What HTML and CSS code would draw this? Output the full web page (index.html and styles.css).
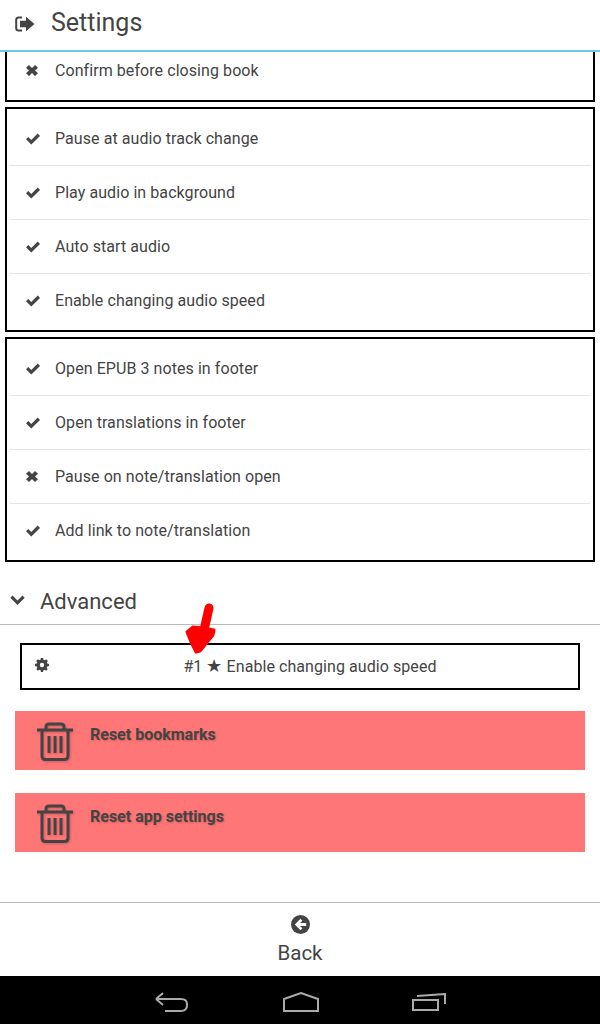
FILE: index.html
```html
<!DOCTYPE html>
<html lang="en">
<head>
<meta charset="utf-8">
<title>Settings</title>
<link rel="stylesheet" href="styles.css">
</head>
<body>
<svg class="defs" width="0" height="0" aria-hidden="true">
  <defs>
    <symbol id="i-check" viewBox="0 0 14 12"><path d="M0 6.300 2.300 3.900 5.300 6.900 11.700 .5 14 2.900 5.300 11.500Z" fill="currentColor"/></symbol>
    <symbol id="i-x" viewBox="0 0 12 11"><path d="M3 0 6 3 9 0 12 2.800 9 5.500 12 8.200 9 11 6 8 3 11 0 8.200 3 5.500 0 2.800Z" fill="currentColor"/></symbol>
    <symbol id="i-trash" viewBox="0 0 36 40"><path d="M0 8H36M9 7V5Q9 2 12 2H24Q27 2 27 5V7M5 9V34Q5 37.500 8.500 37.500H27.500Q31 37.500 31 34V9M12 14V31M18 14V31M24 14V31" fill="none" stroke="currentColor" stroke-width="3"/></symbol>
  </defs>
</svg>
<header class="topbar">
  <svg class="logout" viewBox="0 0 20 16" aria-hidden="true"><path d="M7 1.500H3.500Q1.200 1.500 1.200 4V12Q1.200 14.500 3.500 14.500H7" fill="none" stroke="currentColor" stroke-width="2"/><path d="M5 4.800H11V.8L19.500 8 11 15.200V11.200H5Z" fill="currentColor"/></svg>
  <h1 class="title">Settings</h1>
</header>
<main class="content">
  <section class="box box-cut">
    <div class="row row-cut"><svg class="state state-x"><use href="#i-x"/></svg><span>Confirm before closing book</span></div>
  </section>
  <section class="box">
    <div class="row"><svg class="state"><use href="#i-check"/></svg><span>Pause at audio track change</span></div>
    <div class="row"><svg class="state"><use href="#i-check"/></svg><span>Play audio in background</span></div>
    <div class="row"><svg class="state"><use href="#i-check"/></svg><span>Auto start audio</span></div>
    <div class="row"><svg class="state"><use href="#i-check"/></svg><span>Enable changing audio speed</span></div>
  </section>
  <section class="box">
    <div class="row"><svg class="state"><use href="#i-check"/></svg><span>Open EPUB 3 notes in footer</span></div>
    <div class="row"><svg class="state"><use href="#i-check"/></svg><span>Open translations in footer</span></div>
    <div class="row"><svg class="state state-x"><use href="#i-x"/></svg><span>Pause on note/translation open</span></div>
    <div class="row"><svg class="state"><use href="#i-check"/></svg><span>Add link to note/translation</span></div>
  </section>
  <div class="section-head">
    <svg class="chevron" viewBox="0 0 16 12" aria-hidden="true"><path d="M1.500 2.500 8 9 14.500 2.500" fill="none" stroke="currentColor" stroke-width="3.400"/></svg>
    <h2 class="section-title">Advanced</h2>
  </div>
  <div class="shortcut">
    <svg class="gear" viewBox="0 0 16 16" aria-hidden="true"><path d="M6.700 0H9.300L9.700 2 11.200 2.600 12.900 1.500 14.700 3.300 13.500 5 14.100 6.400 16 6.800V9.200L14 9.600 13.400 11 14.500 12.700 12.700 14.500 11 13.300 9.600 13.900 9.200 16H6.800L6.400 13.900 5 13.300 3.300 14.500 1.500 12.700 2.600 11 2 9.600 0 9.200V6.800L2 6.400 2.600 5 1.400 3.300 3.200 1.500 4.900 2.600 6.300 2Z" fill="currentColor"/><circle cx="8" cy="8" r="2.500" fill="#fff"/></svg>
    <span class="shortcut-text">#1 <span class="star">★</span> Enable changing audio speed</span>
  </div>
  <button class="reset" type="button"><svg class="trash"><use href="#i-trash"/></svg><span class="reset-label">Reset bookmarks</span></button>
  <button class="reset reset-second" type="button"><svg class="trash"><use href="#i-trash"/></svg><span class="reset-label">Reset app settings</span></button>
  <svg class="scribble" viewBox="0 0 34 54" aria-hidden="true"><path d="M4 30 10 25 20 26 31 28 30 33 17 49 13 50 8 40Z" fill="#f00" stroke="#f00" stroke-width="3" stroke-linejoin="round"/><path d="M26 6 21 28" fill="none" stroke="#f00" stroke-width="9" stroke-linecap="round"/></svg>
</main>
<footer class="footer">
  <svg class="back-icon" viewBox="0 0 20 20" aria-hidden="true"><circle cx="10" cy="10" r="10" fill="currentColor"/><path d="M10 4 4 10 10 16 12 14 9.500 11.500H16V8.500H9.500L12 6Z" fill="#fff"/></svg>
  <span class="back-label">Back</span>
</footer>
<nav class="navbar">
  <svg class="nav-back" viewBox="0 0 34 22" aria-hidden="true"><path d="M1 8H26Q32 8 32 13V14Q32 20 26 20H10M1 8 8 2M1 8 8 14" fill="none" stroke="#aaa" stroke-width="2"/></svg>
  <svg class="nav-home" viewBox="0 0 36 20" aria-hidden="true"><path d="M1 7 18 1 35 7V19H1Z" fill="none" stroke="#aaa" stroke-width="2"/></svg>
  <svg class="nav-recent" viewBox="0 0 34 18" aria-hidden="true"><path d="M1 7H26V17H1ZM5 3 33 1V11" fill="none" stroke="#aaa" stroke-width="2"/></svg>
</nav>
</body>
</html>
```
FILE: styles.css
```css
* { box-sizing: border-box; }
html, body { margin: 0; padding: 0; }
body {
  width: 600px;
  height: 1024px;
  display: flex;
  flex-direction: column;
  overflow: hidden;
  background: #fff;
  color: #444;
  font-family: Roboto, "Liberation Sans", sans-serif;
}
.defs { position: absolute; }
.topbar {
  height: 52px;
  flex: none;
  display: flex;
  align-items: center;
  padding: 0 0 5px 15px;
  border-bottom: 2px solid #6cc7e8;
}
.logout { width: 20px; height: 16px; margin-top: 2px; }
.title { margin: 0 0 0 16px; font-size: 25px; font-weight: 400; line-height: 44px; }
.content { position: relative; flex: 1; display: flex; flex-direction: column; }
.box {
  margin: 5px 5px 0;
  padding: 3px 3px 3px;
  border: 2px solid #000;
}
.box-cut { margin-top: 0; padding-top: 0; padding-bottom: 0; height: 50px; border-top: 0; }
.row {
  height: 54px;
  display: flex;
  align-items: center;
  padding-left: 16px;
  font-size: 16px;
  letter-spacing: .07px;
  border-bottom: 1px solid #e4e4e4;
}
.row:last-child { height: 53px; border-bottom: 0; }
.box-cut .row-cut { height: 36px; }
.state { width: 14px; height: 12px; margin-right: 15px; flex: none; }
.state-x { width: 12px; height: 11px; margin-left: 0; margin-right: 17px; }
.section-head {
  height: 50px;
  margin-top: 13px;
  display: flex;
  align-items: center;
  padding: 3px 0 0 10px;
  border-bottom: 1px solid #bbb;
}
.chevron { width: 15px; height: 12px; margin-top: -3px; }
.section-title { margin: 0 0 0 15px; font-size: 22px; font-weight: 400; }
.shortcut {
  position: relative;
  height: 47px;
  margin: 18px 20px 0;
  padding-left: 20px;
  display: flex;
  align-items: center;
  justify-content: center;
  border: 2px solid #000;
  font-size: 16px;
  letter-spacing: .07px;
}
.star { font-size: 18px; line-height: 16px; }
.gear { position: absolute; left: 13px; top: 13px; width: 14px; height: 14px; }
.reset {
  height: 59px;
  margin: 21px 15px 0;
  padding: 11px 0 0 22px;
  display: flex;
  align-items: flex-start;
  border: 0;
  background: #ff7676;
  color: #444;
  font-family: inherit;
  text-shadow: 1px 1px 2px rgba(0, 0, 0, .2);
}
.reset-second { margin-top: 23px; }
.trash { width: 36px; height: 40px; flex: none; filter: drop-shadow(1px 1px 1px rgba(0, 0, 0, .2)); }
.reset-label { margin-left: 17px; padding-top: 2px; font-size: 16px; font-weight: 700; line-height: 22px; }
.scribble { position: absolute; left: 183px; top: 550px; width: 34px; height: 54px; }
.footer {
  height: 74px;
  flex: none;
  display: flex;
  flex-direction: column;
  align-items: center;
  padding-top: 12px;
  border-top: 1px solid #bbb;
}
.back-icon { width: 19px; height: 19px; flex: none; }
.back-label { font-size: 20.5px; line-height: 28px; margin-top: 5px; }
.navbar {
  height: 48px;
  flex: none;
  display: flex;
  justify-content: space-between;
  align-items: center;
  padding: 3px 154px 0 155px;
  background: #000;
}
.nav-back { width: 34px; height: 22px; }
.nav-home { width: 36px; height: 20px; }
.nav-recent { width: 34px; height: 18px; }
```
